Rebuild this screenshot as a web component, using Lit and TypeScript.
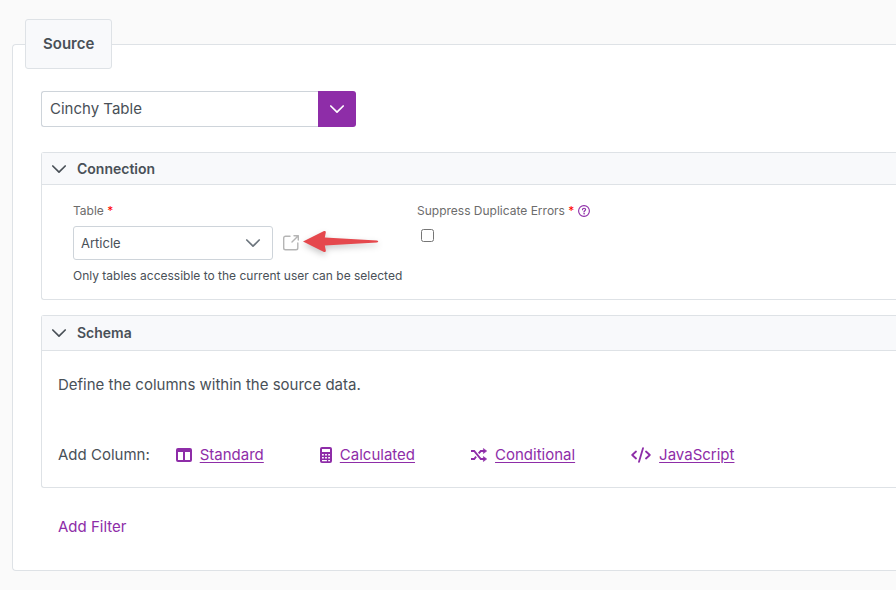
import { LitElement, html, svg, css } from "lit";
import { customElement } from "lit/decorators.js";

const chevron = html`<svg class="chevron" viewBox="0 0 16 16" width="16" height="16" aria-hidden="true">
  <path d="M1.800 5 8 11.200l6.200-6.200" fill="none" stroke="currentColor" stroke-width="1.700" stroke-linecap="round" stroke-linejoin="round" />
</svg>`;

const columnKinds = [
  {
    name: "Standard",
    width: 16,
    icon: svg`<path fill-rule="evenodd" d="M2 1h12a2 2 0 0 1 2 2v10a2 2 0 0 1-2 2H2a2 2 0 0 1-2-2V3a2 2 0 0 1 2-2zm0 4v8h5V5zm7 0v8h5V5z"/>`,
  },
  {
    name: "Calculated",
    width: 12,
    icon: svg`<path fill-rule="evenodd" d="M2 0h8a2 2 0 0 1 2 2v12a2 2 0 0 1-2 2H2a2 2 0 0 1-2-2V2a2 2 0 0 1 2-2zm0 2v3h8V2zM2 7v1.500h1.800V7zm3.100 0v1.500h1.800V7zm3.100 0v1.500H10V7zM2 10v1.500h1.800V10zm3.100 0v1.500h1.800V10zm3.100 0v1.500H10V10zM2 13v1.300h4.900V13zm6.200 0v1.300H10V13z"/>`,
  },
  {
    name: "Conditional",
    width: 16,
    icon: svg`<path d="M0 4h3.200L9.800 12H13M0 12h3.200l1.900-2.300M7.700 6.400 9.800 4H13" fill="none" stroke="currentColor" stroke-width="1.900"/><path d="M12.400 1.500l3.300 2.500-3.300 2.500zM12.400 9.500l3.300 2.500-3.300 2.500z" stroke="currentColor" stroke-width=".6" stroke-linejoin="round"/>`,
  },
  {
    name: "JavaScript",
    width: 20,
    icon: svg`<path d="M5 4.500 1.200 8 5 11.500M15 4.500 18.800 8 15 11.500M12 1.200 8 14.800" fill="none" stroke="currentColor" stroke-width="1.800" stroke-linecap="round" stroke-linejoin="round"/>`,
  },
];

@customElement("app-root")
export class AppRoot extends LitElement {
  static styles = css`
    :host {
      display: block;
      box-sizing: border-box;
      min-height: 100vh;
      padding: 19px 0 19px 12px;
      background: #fafafa;
      color: #495057;
      font: 400 15px/24px Inter, "Liberation Sans", sans-serif;
    }
    * { box-sizing: border-box; }
    svg { display: block; flex: none; }
    button, input, select { font: inherit; color: inherit; margin: 0; }
    a { color: #8e2da8; }

    .source {
      margin: 0;
      padding: 0 0 31px 12px;
      min-width: 0;
      border: 1px solid #dee2e6;
      border-right: 0;
      border-radius: 4px 0 0 4px;
      background: #fff;
    }
    .legend {
      padding: 12px 17px;
      border: 1px solid #dee2e6;
      border-radius: 3px;
      background: #f8f9fb;
      font-weight: 600;
    }
    .content { padding: 22px 0 0 16px; }

    .combo { display: flex; width: 315px; height: 36px; margin-bottom: 25px; }
    .combo-input {
      flex: 1;
      min-width: 0;
      padding: 0 8px;
      border: 1px solid #ced4da;
      border-right: 0;
      border-radius: 3px 0 0 3px;
      background: #fff;
    }
    .combo-button {
      display: grid;
      place-items: center;
      width: 38px;
      padding: 0;
      border: 0;
      border-radius: 0 3px 3px 0;
      background: #8e2da8;
      color: #fff;
    }

    .panel {
      border: 1px solid #dee2e6;
      border-right: 0;
      border-radius: 3px 0 0 3px;
    }
    .panel + .panel { margin-top: 15px; }
    .panel-title { margin: 0; font-size: 14px; font-weight: 600; }
    .toggle {
      display: flex;
      align-items: center;
      gap: 10px;
      width: 100%;
      padding: 4px 9px 3px;
      border: 0;
      border-bottom: 1px solid #dee2e6;
      background: #f8f9fb;
      text-align: left;
    }
    .roomy .toggle { padding-block: 5px; }

    .fields {
      display: grid;
      grid-template-columns: 328px 1fr;
      gap: 16px;
      padding: 18px 31px 15px;
      font-size: 12px;
      line-height: 16px;
    }
    .field { display: flex; flex-direction: column; gap: 7px; }
    .label-row { display: flex; align-items: center; gap: 4px; }
    .label { color: #6c6c6c; }
    .star { color: #f00; }
    .help {
      padding: 0;
      border: 0;
      background: none;
      color: #8e2da8;
    }
    .picker { display: flex; align-items: center; gap: 10px; }
    .select-box { position: relative; width: 200px; }
    .select {
      display: block;
      appearance: none;
      width: 100%;
      height: 34px;
      padding: 0 32px 0 7px;
      border: 1px solid #ced4da;
      border-radius: 3px;
      background: #fff;
      font-size: 13px;
    }
    .select-box .chevron {
      position: absolute;
      right: 12px;
      top: 9px;
      color: #6c757d;
      pointer-events: none;
    }
    .open { position: relative; color: #b5b5b5; }
    .arrow {
      position: absolute;
      left: 17px;
      top: -6px;
      filter: drop-shadow(0 3px 3px rgba(0, 0, 0, 0.22));
    }
    .hint { padding-top: 1px; white-space: nowrap; }
    .check { width: 13px; height: 13px; margin: 3px 4px; }

    .schema { padding: 22px 16px 20px; }
    .intro { margin: 0 0 46px; }
    .columns { display: flex; flex-wrap: wrap; gap: 0 26px; }
    .kinds { display: flex; flex-wrap: wrap; gap: 0 56px; }
    .kind { display: flex; align-items: center; gap: 8px; text-decoration: none; }
    .kind-name { text-decoration: underline; text-underline-offset: 2px; }
    .filter { display: inline-block; margin: 27px 17px 0; text-decoration: none; vertical-align: top; }
  `;

  render() {
    return html`
      <fieldset class="source">
        <legend class="legend">Source</legend>
        <div class="content">
          <div class="combo">
            <input class="combo-input" type="text" aria-label="Source type" .value=${"Cinchy Table"} />
            <button class="combo-button" type="button" aria-label="Show source types">${chevron}</button>
          </div>

          <section class="panel">
            <h2 class="panel-title">
              <button class="toggle" type="button" aria-expanded="true">${chevron}Connection</button>
            </h2>
            <div class="fields">
              <div class="field">
                <label class="label" for="table">Table <span class="star">*</span></label>
                <div class="picker">
                  <div class="select-box">
                    <select class="select" id="table" aria-describedby="table-hint">
                      <option>Article</option>
                    </select>
                    ${chevron}
                  </div>
                  <a class="open" href="#table" aria-label="Open table">
                    <svg viewBox="0 0 16 16" width="16" height="16" fill="none" stroke="currentColor" stroke-width="1.400" stroke-linecap="round" stroke-linejoin="round">
                      <path d="M7 1.200H2.500A1.800 1.800 0 0 0 .7 3v10a1.800 1.800 0 0 0 1.800 1.800h10.500a1.800 1.800 0 0 0 1.800-1.800V8M11 .7h4.300V5M15.300.7 9 7" />
                    </svg>
                    <svg class="arrow" viewBox="0 0 84 28" width="84" height="28" aria-hidden="true">
                      <path d="M3 12.500 24 2q2-.5 1.800 1.500L24.800 8.500 77 11.500q2.500 1 0 2L24.800 16.500l1 5q.2 2-1.800 1.500z" fill="#e5484d" />
                    </svg>
                  </a>
                </div>
                <span class="hint" id="table-hint">Only tables accessible to the current user can be selected</span>
              </div>
              <div class="field">
                <div class="label-row">
                  <label class="label" for="suppress">Suppress Duplicate Errors <span class="star">*</span></label>
                  <button class="help" type="button" aria-label="About duplicate errors">
                    <svg viewBox="0 0 12 12" width="12" height="12" fill="none" stroke="currentColor" stroke-linecap="round">
                      <circle cx="6" cy="6" r="5.400" stroke-width="1.100" />
                      <path d="M4.500 4.700C4.500 2.700 7.600 2.800 7.600 4.600 7.600 5.700 6 5.700 6 7" stroke-width="1.200" />
                      <circle cx="6" cy="8.800" r=".3" stroke-width=".8" />
                    </svg>
                  </button>
                </div>
                <input class="check" id="suppress" type="checkbox" />
              </div>
            </div>
          </section>

          <section class="panel roomy">
            <h2 class="panel-title">
              <button class="toggle" type="button" aria-expanded="true">${chevron}Schema</button>
            </h2>
            <div class="schema">
              <p class="intro">Define the columns within the source data.</p>
              <div class="columns">
                <span>Add Column:</span>
                <nav class="kinds" aria-label="Add column">
                  ${columnKinds.map(
                    (kind) => html`<a class="kind" href="#${kind.name.toLowerCase()}">
                      <svg viewBox="0 0 ${kind.width} 16" width=${kind.width} height="16" fill="currentColor" aria-hidden="true">${kind.icon}</svg>
                      <span class="kind-name">${kind.name}</span>
                    </a>`
                  )}
                </nav>
              </div>
            </div>
          </section>

          <a class="filter" href="#filter">Add Filter</a>
        </div>
      </fieldset>
    `;
  }
}
